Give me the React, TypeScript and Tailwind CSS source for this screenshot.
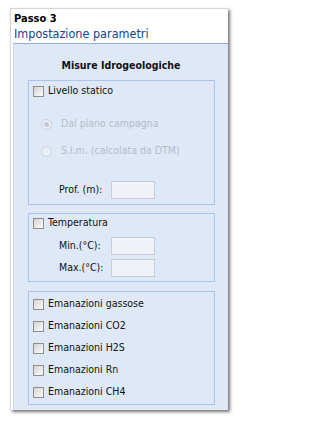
import React from "react";

const font = { fontFamily: '"DejaVu Sans Condensed", "Liberation Sans", sans-serif' };

function Check({ label }: { label: string }) {
  return (
    <div className="flex items-center h-[22px] pl-[4px]">
      <span className="w-[11px] h-[11px] border border-[#8e8e8e] bg-gradient-to-br from-[#d4d4d4] to-[#fbfbfb] shrink-0" />
      <span className="ml-[4px] text-[10.5px] text-[#111]">{label}</span>
    </div>
  );
}

function Radio({ label, checked }: { label: string; checked?: boolean }) {
  return (
    <div className="flex items-center h-[18px] pl-[12px]">
      <span className="w-[11px] h-[11px] rounded-full border border-[#c9d1dd] bg-[#e9eef7] flex items-center justify-center shrink-0">
        {checked && <span className="w-[5px] h-[5px] rounded-full bg-[#c3cad6]" />}
      </span>
      <span className="ml-[9px] text-[10.5px] text-[#b4bccb]">{label}</span>
    </div>
  );
}

function Field({ label }: { label: string }) {
  return (
    <div className="flex items-center h-[18px] pl-[30px]">
      <span className="w-[52px] text-[10.5px] text-[#111]">{label}</span>
      <span className="w-[44px] h-[18px] border border-[#c6cdd8] bg-[#eff3f9]" />
    </div>
  );
}

export default function App() {
  return (
    <div className="w-[238px] h-[421px] bg-white pt-[8px] pl-[10px]" style={font}>
      <div className="w-[218px] h-[402px] bg-white border-l border-t border-[#d6d6d6] shadow-[2px_2px_3px_rgba(0,0,0,0.55)] flex flex-col">
        <div className="h-[34px] pl-[3px] pt-[3px] flex flex-col">
          <div className="text-[11px] font-bold text-black leading-[13px]">Passo 3</div>
          <div className="text-[12.5px] text-[#15428b] leading-[16px] mt-[1px]">Impostazione parametri</div>
        </div>
        <div className="flex-1 ml-[2px] border-t border-t-[#8fb0dd] border-l border-l-[#c7d6ec] bg-[#dfe8f6] flex flex-col">
          <div className="h-[36px] flex items-center justify-center text-[10.5px] font-bold text-[#111] pt-[8px]">
            Misure Idrogeologiche
          </div>
          <div className="mx-[14px] mr-[13px] flex flex-col">
            <div className="border border-[#a9c5ee] h-[125px] flex flex-col pt-[1px]">
              <div className="flex items-center h-[18px] pl-[4px]">
                <span className="w-[11px] h-[11px] border border-[#8e8e8e] bg-gradient-to-br from-[#d4d4d4] to-[#fbfbfb] shrink-0" />
                <span className="ml-[4px] text-[10.5px] text-[#111]">Livello statico</span>
              </div>
              <div className="mt-[15px]">
                <Radio label="Dal piano campagna" checked />
              </div>
              <div className="mt-[9px]">
                <Radio label="S.l.m. (calcolata da DTM)" />
              </div>
              <div className="mt-[21px]">
                <Field label="Prof. (m):" />
              </div>
            </div>
            <div className="border border-[#a9c5ee] h-[69px] mt-[8px] flex flex-col">
              <div className="flex items-center h-[18px] pl-[4px]">
                <span className="w-[11px] h-[11px] border border-[#8e8e8e] bg-gradient-to-br from-[#d4d4d4] to-[#fbfbfb] shrink-0" />
                <span className="ml-[4px] text-[10.5px] text-[#111]">Temperatura</span>
              </div>
              <div className="mt-[5px]">
                <Field label="Min.(°C):" />
              </div>
              <div className="mt-[4px]">
                <Field label="Max.(°C):" />
              </div>
            </div>
            <div className="border border-[#a9c5ee] h-[114px] mt-[9px] flex flex-col pt-[1px]">
              <Check label="Emanazioni gassose" />
              <Check label="Emanazioni CO2" />
              <Check label="Emanazioni H2S" />
              <Check label="Emanazioni Rn" />
              <Check label="Emanazioni CH4" />
            </div>
          </div>
        </div>
      </div>
    </div>
  );
}
